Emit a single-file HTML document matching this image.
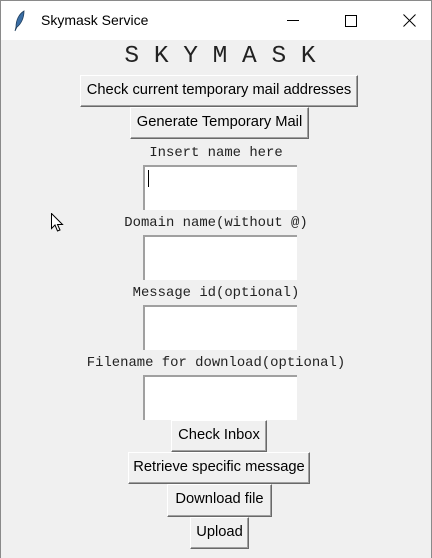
<!DOCTYPE html>
<html><head><style>
*{margin:0;padding:0;box-sizing:border-box}
body{width:432px;height:558px;background:#f0f0f0;position:relative;overflow:hidden;font-family:"Liberation Sans",sans-serif}
.win{position:absolute;left:0;top:0;width:432px;height:558px;border:1px solid #8a8a8a;border-bottom:none}
.tb{position:absolute;left:1px;top:1px;width:430px;height:39px;background:#fff}
.tt{position:absolute;left:40px;top:11px;font-size:14px;color:#000}
.mono{font-family:"Liberation Mono",monospace;color:#222;position:absolute;left:0;width:432px;text-align:center;white-space:pre}
.lab{font-size:13.9px}
.e{position:absolute;left:143px;width:154px;height:45px;background:#fff;border-top:2px solid #a0a0a0;border-left:2px solid #a0a0a0}
.b{position:absolute;background:#f0f0f0;border:1px solid;border-color:#fff #696969 #696969 #fff;box-shadow:inset -1px -1px 0 #a0a0a0;font-size:14.7px;color:#000;text-align:center;line-height:29px;white-space:nowrap}
</style></head><body>
<div class="win"></div>
<div class="tb">
<svg style="position:absolute;left:12px;top:9px" width="14" height="22" viewBox="0 0 14 22"><path d="M11 1C6 4 3 10 3 17L2 21L4 17C8 14 11 8 11 1Z" fill="#3a6ea5" stroke="#1e3d5c" stroke-width="0.8"/></svg>
<div class="tt">Skymask Service</div>
<div style="position:absolute;left:286px;top:19px;width:12px;height:1px;background:#000"></div>
<div style="position:absolute;left:344px;top:14px;width:12px;height:12px;border:1px solid #000"></div>
<svg style="position:absolute;left:402px;top:13px" width="13" height="13"><path d="M0.5 0.5L12.5 12.5M12.5 0.5L0.5 12.5" stroke="#000" stroke-width="1"/></svg>
</div>
<div class="mono" style="top:43px;font-size:24.5px;left:4px">S K Y M A S K</div>
<div class="b" style="left:80px;top:75px;width:278px;height:32px">Check current temporary mail addresses</div>
<div class="b" style="left:130px;top:107px;width:179px;height:32px">Generate Temporary Mail</div>
<div class="mono lab" style="top:145px">Insert name here</div>
<div class="e" style="top:165px"><div style="position:absolute;left:3px;top:3px;width:1px;height:17px;background:#000"></div></div>
<div class="mono lab" style="top:215px">Domain name(without @)</div>
<div class="e" style="top:235px"></div>
<div class="mono lab" style="top:285px">Message id(optional)</div>
<div class="e" style="top:305px"></div>
<div class="mono lab" style="top:355px">Filename for download(optional)</div>
<div class="e" style="top:375px"></div>
<div class="b" style="left:171px;top:420px;width:96px;height:32px">Check Inbox</div>
<div class="b" style="left:128px;top:452px;width:182px;height:32px">Retrieve specific message</div>
<div class="b" style="left:167px;top:484px;width:105px;height:33px">Download file</div>
<div class="b" style="left:190px;top:517px;width:59px;height:32px">Upload</div>
<svg style="position:absolute;left:51px;top:213px" width="14" height="20"><path d="M0.5 0.5V15.5L4 12L6.5 18L9 17L6.5 11.5H11.5Z" fill="#fff" stroke="#000" stroke-width="1"/></svg>
</body></html>
